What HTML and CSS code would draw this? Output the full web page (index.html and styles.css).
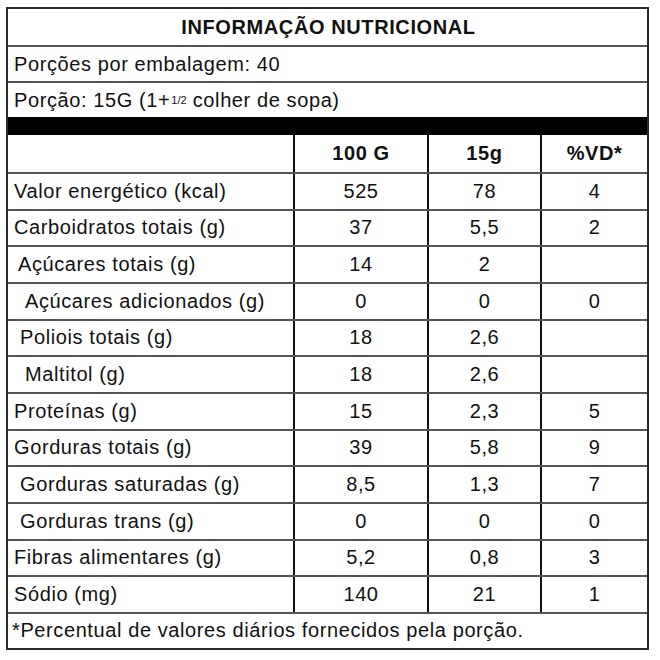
FILE: index.html
```html
<!DOCTYPE html>
<html lang="pt">
<head>
<meta charset="utf-8">
<link rel="stylesheet" href="styles.css">
</head>
<body>
<div class="label">
  <div class="row title">INFORMAÇÃO NUTRICIONAL</div>
  <div class="row info">Porções por embalagem: 40</div>
  <div class="row info">Porção: 15G (1+<sup class="frac">1/2</sup>&nbsp;colher de sopa)</div>
  <div class="bar"></div>
  <div class="row grid head"><div class="c"></div><div class="c">100 G</div><div class="c">15g</div><div class="c">%VD*</div></div>
  <div class="row grid data"><div class="c n">Valor energético (kcal)</div><div class="c">525</div><div class="c">78</div><div class="c">4</div></div>
  <div class="row grid data"><div class="c n">Carboidratos totais (g)</div><div class="c">37</div><div class="c">5,5</div><div class="c">2</div></div>
  <div class="row grid data"><div class="c n i1">Açúcares totais (g)</div><div class="c">14</div><div class="c">2</div><div class="c"></div></div>
  <div class="row grid data"><div class="c n i3">Açúcares adicionados (g)</div><div class="c">0</div><div class="c">0</div><div class="c">0</div></div>
  <div class="row grid data"><div class="c n i2">Poliois totais (g)</div><div class="c">18</div><div class="c">2,6</div><div class="c"></div></div>
  <div class="row grid data"><div class="c n i3">Maltitol (g)</div><div class="c">18</div><div class="c">2,6</div><div class="c"></div></div>
  <div class="row grid data"><div class="c n">Proteínas (g)</div><div class="c">15</div><div class="c">2,3</div><div class="c">5</div></div>
  <div class="row grid data"><div class="c n">Gorduras totais (g)</div><div class="c">39</div><div class="c">5,8</div><div class="c">9</div></div>
  <div class="row grid data"><div class="c n i2">Gorduras saturadas (g)</div><div class="c">8,5</div><div class="c">1,3</div><div class="c">7</div></div>
  <div class="row grid data"><div class="c n i2">Gorduras trans (g)</div><div class="c">0</div><div class="c">0</div><div class="c">0</div></div>
  <div class="row grid data"><div class="c n">Fibras alimentares (g)</div><div class="c">5,2</div><div class="c">0,8</div><div class="c">3</div></div>
  <div class="row grid data"><div class="c n">Sódio (mg)</div><div class="c">140</div><div class="c">21</div><div class="c">1</div></div>
  <div class="row foot">*Percentual de valores diários fornecidos pela porção.</div>
</div>
</body>
</html>
```

FILE: styles.css
```css
html, body {
  margin: 0;
  padding: 0;
  background: #ffffff;
}

body {
  padding: 7px 0 0 6px;
  font-family: "Liberation Sans", Arial, sans-serif;
  font-size: 20px;
  letter-spacing: 0.6px;
  color: #111111;
}

.label {
  width: 643px;
  box-sizing: border-box;
  border: 2px solid #2a2a2a;
}

.row {
  box-sizing: border-box;
  display: flex;
  align-items: center;
  border-top: 2px solid #555555;
}

.title {
  border-top: none;
  height: 36px;
  justify-content: center;
  font-weight: bold;
  padding-left: 2px;
}

.info {
  height: 36px;
  padding-left: 6px;
}

.frac {
  font-size: 11px;
  letter-spacing: 0;
  line-height: 0;
  vertical-align: 8px;
  margin-left: 1px;
}

.bar {
  height: 18px;
  background: #000000;
}

.grid {
  display: grid;
  grid-template-columns: 285px 134px 113px 1fr;
  align-items: stretch;
}

.head {
  border-top: none;
  height: 37px;
  font-weight: bold;
}

.data {
  height: 36.67px;
}

.c {
  display: flex;
  align-items: center;
  justify-content: center;
  border-left: 2px solid #111111;
}

.c:first-child {
  border-left: none;
}

.n {
  justify-content: flex-start;
  padding-left: 6px;
}

.i1 { padding-left: 10px; }
.i2 { padding-left: 12px; }
.i3 { padding-left: 17px; }

.foot {
  height: 36px;
  padding-left: 4px;
}
```
